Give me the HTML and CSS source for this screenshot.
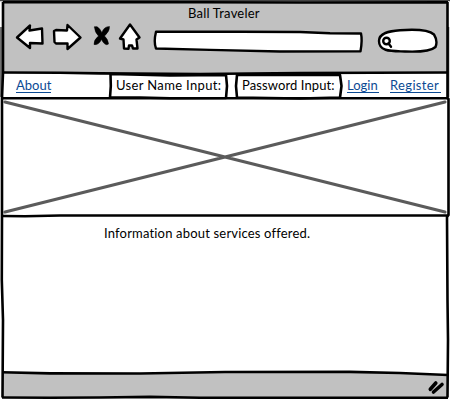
FILE: index.html
```html
<!DOCTYPE html>
<html lang="en">
<head>
<meta charset="utf-8">
<title>Ball Traveler</title>
<link rel="stylesheet" href="styles.css">
</head>
<body>
<div class="window">
  <header class="chrome">
    <div class="title">Ball Traveler</div>
    <div class="toolbar">
      <svg class="icon back" width="30" height="28" viewBox="15 23 30 28"><path d="M17 37.5 30 25.5 29.5 30.5 42 28.5 42.5 43.5 30 43 30 48Z"/></svg>
      <svg class="icon forward" width="32" height="30" viewBox="51 22 32 30"><path d="M54 31 56 30 67 30.5 67.5 25 80.5 37.5 67.5 49 67.5 43.5 56 43.5 54.5 42Z"/></svg>
      <svg class="icon stop" width="20" height="24" viewBox="92 24 20 24"><path class="solid" d="M94.500 27Q98 25 101.800 32.500Q104 26.500 109.500 26.500Q110 31 104.500 36Q108 39 108.500 44Q105 46.500 101.500 39.500Q98.500 45.500 94 44.500Q93.500 40 98.500 36Q94.500 32 94.500 27Z"/></svg>
      <svg class="icon home" width="26" height="30" viewBox="117 22 26 30"><path d="M130 24.500 139.500 37.500 136.500 39.500 137.500 48.500 133 48.500 132 45.500 129 45.500 128.500 48.800 124 48.500 123.500 39.500 120 38.500Z"/></svg>
      <svg class="icon address" width="212" height="26" viewBox="152 28 212 26"><path d="M156 31.700 240 31.800 300 32 330 33.200 361 33.500Q362.500 40 360.500 51.200L280 51.500 210 49.900 156 48.500Q153.500 42 156 31.700Z"/></svg>
      <svg class="icon search" width="64" height="28" viewBox="376 27 64 28"><path d="M379 41C379 33 389 31 400 30.200C416 29 429 30 434 34.500Q438 41 435.500 47C431 51 417 52 405 51.500C392 51 379 52 379 41Z"/><circle cx="386.500" cy="41" r="3.300"/><path d="m388.500 43.500 2.500 3.200"/></svg>
    </div>
  </header>
  <nav class="nav">
    <a class="link about">About</a>
    <span class="field user">User Name Input:</span>
    <span class="field password">Password Input:</span>
    <a class="link login">Login</a>
    <a class="link register">Register</a>
  </nav>
  <section class="hero">
    <svg width="450" height="118" viewBox="0 98 450 118"><path class="cross" d="M5 102 445 212M5 212 445 102"/></svg>
  </section>
  <main class="content"><p class="info">Information about services offered.</p></main>
  <footer class="status">
    <svg width="450" height="28" viewBox="0 372 450 28"><path class="fill" d="M2 372 140 373.500 200 372 340 371.500 448 374.500V398H2Z"/><path class="grip" d="m430.300 389.300 5.500-6.300m-2.300 9 8.500-7.500"/></svg>
  </footer>
  <svg class="frame" width="450" height="400" viewBox="0 0 450 400">
    <path class="shade" d="M0 .500H450M1 27V97M448.500 27V97"/>
    <path d="M3 2 200 2.200 300 2.500 448 2.200M3 2V73L2 98V215L1.800 280 3 320 2.500 397.500M447.500 2V98L448.500 99V215L447 217 447.500 300 448 340 447.500 397.500"/>
    <path d="M2 72.500 60 72.700 100 73.400 200 74 300 73 448 72.500"/>
    <path d="M2 98.300H448M2 216 25 216.200 60 215.500H448"/>
    <path d="M110.500 74 170 75.500 226 75 227 86 226 98 170 98.300 140 97.500 110 97.500 110.800 86Z"/>
    <path d="M237 74.800 290 75 340 75 341.500 86 340 97.500 300 98.500 237 97.500 236 86Z"/>
    <path d="M2 372.300 50 373.400 140 373.500 225 372 350 371.900 400 373 448 375M2 397.500 50 397.800 100 397.500 150 396.900 200 397.800H448"/>
  </svg>
</div>
</body>
</html>
```
FILE: styles.css
```css
* { box-sizing: border-box; }
body { margin: 0; background: #fff; overflow: hidden; }
.window {
  position: relative;
  display: flex;
  flex-direction: column;
  width: 450px;
  height: 400px;
  font: 13px/18px Lato, sans-serif;
  color: #000;
}
.chrome { height: 73px; margin: 0 2px; padding-top: 4px; background: #c1c1c1; flex: none; }
.title { margin-left: 186px; letter-spacing: .2px; white-space: nowrap; height: 18px; }
.toolbar { display: flex; align-items: flex-start; margin-left: 13px; }
.icon { display: block; flex: none; fill: #fff; stroke: #000; stroke-width: 2.4; stroke-linejoin: round; stroke-linecap: round; }
.back { margin-top: 1px; }
.forward { margin-left: 6px; }
.stop { margin: 2px 0 0 9px; }
.stop .solid { fill: #000; stroke-width: .5; }
.home { margin-left: 5px; }
.address { margin: 6px 0 0 9px; }
.search { margin: 5px 0 0 12px; }
.nav { display: flex; height: 25px; flex: none; padding: 3px 0 0 16px; white-space: nowrap; }
.link { height: 17px; line-height: 18px; color: #0b4a94; border-bottom: 1px solid #0b4a94; }
.field { height: 19px; }
.about { width: 35px; letter-spacing: 0; }
.user { width: 106px; margin-left: 65px; letter-spacing: .35px; }
.password { width: 95px; margin-left: 20px; letter-spacing: .1px; }
.login { width: 32px; margin-left: 10px; }
.register { width: 51px; margin-left: 11px; letter-spacing: .35px; }
.hero { height: 118px; flex: none; }
.hero svg, .status svg { display: block; }
.cross { fill: none; stroke: #5b5b5b; stroke-width: 3.1; stroke-linecap: round; }
.content { flex: 1; padding: 8px 0 0 104px; }
.info { margin: 0; letter-spacing: .18px; white-space: nowrap; }
.status { height: 28px; flex: none; }
.status svg { overflow: visible; }
.fill { fill: #c1c1c1; }
.grip { fill: none; stroke: #000; stroke-width: 3.6; stroke-linecap: round; }
.frame { position: absolute; inset: 0; fill: none; stroke: #000; stroke-width: 2.6; stroke-linejoin: round; pointer-events: none; }
.frame .shade { stroke: #444; stroke-width: 1.500; }
```
